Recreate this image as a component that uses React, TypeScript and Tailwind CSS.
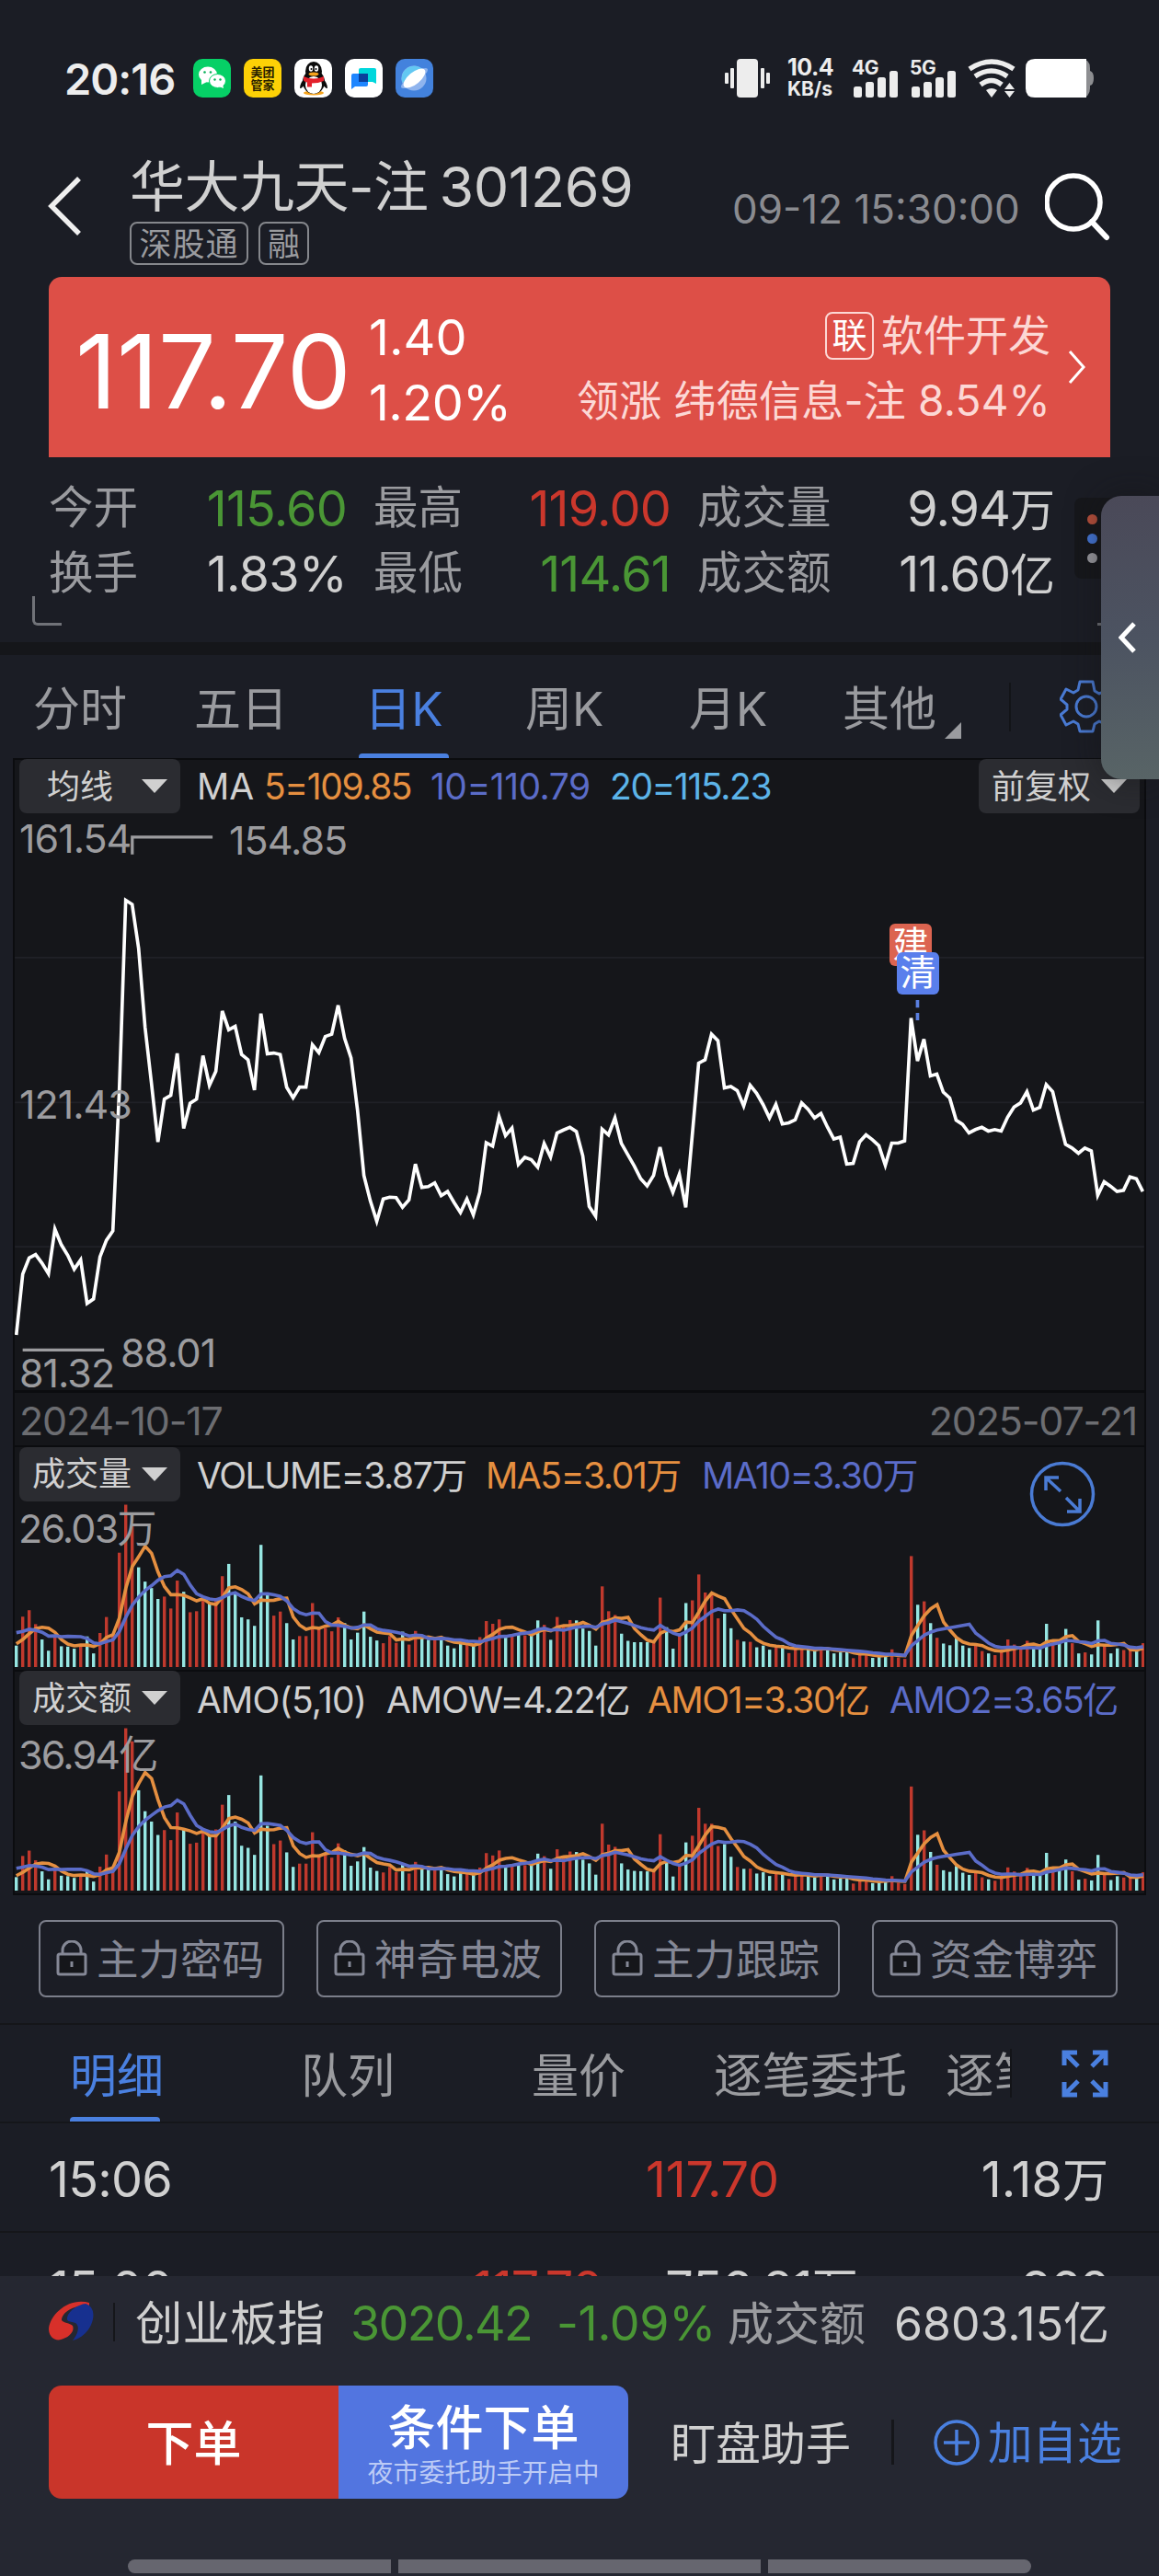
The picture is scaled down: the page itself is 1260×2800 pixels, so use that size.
const CLOSES = [
  1350, 1188, 1145, 1136, 1159, 1187, 1068, 1110, 1138, 1175, 1150, 1266, 1254, 1142, 1098, 1073, 700, 192, 203, 320,
  530, 680, 836, 722, 712, 600, 800, 733, 722, 606, 685, 648, 487, 537, 528, 603, 617, 698, 494, 601,
  599, 603, 690, 718, 690, 690, 577, 598, 555, 549, 472, 560, 612, 750, 925, 993, 1047, 988, 983, 984,
  1010, 990, 895, 957, 955, 945, 979, 968, 997, 1024, 988, 1030, 970, 838, 847, 768, 819, 799, 896, 877,
  883, 903, 840, 876, 812, 804, 797, 808, 873, 1008, 1034, 802, 817, 772, 840, 870, 900, 934, 953, 925,
  850, 925, 970, 922, 1010, 820, 626, 617, 549, 566, 692, 688, 699, 740, 685, 706, 736, 772, 736, 788,
  785, 777, 732, 749, 772, 760, 796, 828, 823, 895, 893, 836, 817, 830, 846, 898, 839, 839, 833, 506,
  620, 562, 660, 655, 703, 719, 778, 789, 812, 803, 797, 807, 803, 807, 770, 743, 732, 702, 751, 744,
  683, 702, 775, 842, 852, 866, 852, 860, 978, 942, 954, 968, 965, 929, 934, 968,
]

const VOLUMES = [
  63, 148, 167, 126, 81, 48, 88, 61, 60, 54, 60, 90, 40, 100, 147, 98, 336, 477, 418, 293,
  251, 232, 200, 207, 172, 254, 221, 161, 164, 203, 188, 203, 267, 303, 218, 146, 140, 121, 359, 211,
  151, 163, 129, 81, 91, 91, 188, 118, 115, 105, 146, 129, 81, 101, 163, 89, 78, 70, 91, 71,
  104, 66, 106, 86, 80, 80, 86, 63, 55, 71, 68, 63, 88, 135, 127, 140, 91, 93, 98, 93,
  98, 137, 124, 80, 147, 121, 138, 137, 113, 106, 63, 237, 164, 153, 98, 77, 73, 73, 73, 73,
  204, 117, 54, 98, 188, 196, 272, 219, 213, 143, 157, 114, 80, 75, 74, 58, 63, 51, 61, 65,
  41, 53, 57, 55, 46, 58, 53, 40, 43, 46, 26, 38, 40, 27, 31, 33, 52, 28, 24, 326,
  183, 193, 129, 86, 69, 64, 86, 63, 56, 63, 47, 40, 35, 48, 81, 66, 56, 77, 56, 53,
  127, 75, 78, 112, 70, 40, 43, 37, 137, 63, 40, 55, 50, 50, 53, 70,
]

// the nine sessions before the first visible one, needed by the averages
const LEAD_IN = [108, 107, 156, 141, 158, 83, 82, 51, 61]

// r = up day, c = down day
const DAYS = [
  'crrrccrccc', 'rccrrrrrrc', 'cccrrrcrrr', 'crrccccccc', 'rrccrrrrrr', 'rccccccrrr',
  'crrccrcccc', 'rcrrrrcrcr', 'ccrcrrrccc', 'crrrcccccr', 'rccrcrrrrr', 'ccrcrcccrc',
  'rrrccrcccc', 'rrrcccrrrr', 'crcrcccccr', 'rcrrrrrrcc', 'crccrcrccr', 'ccrrcr',
].join('')

const PITCH = 7

const AMOUNTS = VOLUMES.map((v, i) => {
  const price = 161.54 - ((CLOSES[i] + 40) / 1541) * 80.22
  return Math.min(477, (v * price) / 141.9)
})

function average(values: number[], lead: number[], n: number): number[] {
  const all = [...lead, ...values]
  return values.map((_, i) => {
    const end = i + lead.length + 1
    return all.slice(end - n, end).reduce((a, b) => a + b, 0) / n
  })
}

function toLine(values: number[]): string {
  return values.map((v, i) => `${1.8 + i * PITCH},${181 - v / 2.703}`).join(' ')
}

function Bars({ values, lead }: { values: number[]; lead: number[] }): JSX.Element {
  return (
    <svg className="block" width="1228" height="184" viewBox="0 0 1228 184">
      {values.map((v, i) => (
        <rect
          key={i}
          x={i * PITCH}
          y={181 - v / 2.703}
          width="3.4"
          height={v / 2.703}
          fill={DAYS[i] === 'c' ? '#96e6e2' : '#c0392d'}
        />
      ))}
      <polyline points={toLine(average(values, lead, 5))} fill="none" stroke="#e58f40" strokeWidth="3.6" />
      <polyline points={toLine(average(values, lead, 10))} fill="none" stroke="#5b6cc8" strokeWidth="3.6" />
    </svg>
  )
}

function Caret(): JSX.Element {
  return (
    <svg width="28" height="15" viewBox="0 0 28 15">
      <path d="M0 0h28L14 15z" fill="#d0d0d0" />
    </svg>
  )
}

function Picker({ label }: { label: string }): JSX.Element {
  return (
    <div className="flex h-[59px] w-[175px] shrink-0 items-center justify-between rounded-lg bg-[#2b2c31] pl-[14px] pr-[14px] text-[36px] tracking-normal text-[#d0d0d0]">
      <span className={label.length === 2 ? 'pl-[16px]' : ''}>{label}</span>
      <Caret />
    </div>
  )
}

function StatusBar(): JSX.Element {
  return (
    <div className="flex h-[150px] items-center pl-[70px] pt-[20px] text-[#ededed]">
      <span className="w-[140px] text-[47px] font-semibold tracking-[-1px]">20:16</span>
      <div className="flex w-[578px] gap-[14px]">
        <svg width="41" height="42" viewBox="0 0 41 42">
          <rect width="41" height="42" rx="10" fill="#06d066" />
          <ellipse cx="16" cy="17" rx="10" ry="8.500" fill="#fff" />
          <path d="M9 22l0 6 6-3z" fill="#fff" />
          <ellipse cx="26.500" cy="24" rx="9" ry="7.500" fill="#fff" stroke="#06d066" strokeWidth="1" />
          <path d="M28 30l5 2-1-5z" fill="#fff" />
          <circle cx="12.500" cy="14.500" r="1.300" fill="#06b058" />
          <circle cx="19" cy="14.500" r="1.300" fill="#06b058" />
          <circle cx="23.500" cy="22.500" r="1.200" fill="#06b058" />
          <circle cx="29.500" cy="22.500" r="1.200" fill="#06b058" />
        </svg>
        <div className="flex h-[42px] w-[41px] flex-col items-center justify-center rounded-[10px] bg-[#fdd106] text-[13px] font-bold leading-[14px] text-[#2a2200]">
          <span>美团</span>
          <span>管家</span>
        </div>
        <svg width="41" height="42" viewBox="0 0 41 42">
          <rect width="41" height="42" rx="10" fill="#fff" />
          <ellipse cx="21" cy="37" rx="11" ry="2.500" fill="#f5a31c" />
          <path d="M12 20q-6 6-6 12 3 0 6-6zM30 20q6 6 6 12-3 0-6-6z" fill="#0b0b0b" />
          <ellipse cx="21" cy="25" rx="12" ry="13" fill="#0b0b0b" />
          <ellipse cx="21" cy="13.500" rx="9" ry="10.500" fill="#0b0b0b" />
          <ellipse cx="21" cy="28.500" rx="9" ry="9.500" fill="#fff" />
          <path d="M10 19q11 5 22 0v5q-6 2.500-13 2.500v4h-5v-5q-3-.7-4-2z" fill="#e3202b" />
          <ellipse cx="18" cy="10.500" rx="2.200" ry="3.200" fill="#fff" />
          <ellipse cx="24" cy="10.500" rx="2.200" ry="3.200" fill="#fff" />
          <circle cx="18.500" cy="11" r="1" />
          <circle cx="23.500" cy="11" r="1" />
          <ellipse cx="21" cy="16.500" rx="5.500" ry="2" fill="#f5a31c" />
        </svg>
        <svg width="41" height="42" viewBox="0 0 41 42">
          <rect width="41" height="42" rx="10" fill="#fff" />
          <path d="M17 10h15q2 0 2 2v15l-4-2H15V12q0-2 2-2z" fill="#00d7dc" />
          <path d="M9 16h16v12q0 2-2 2H11l-4 3V18q0-2 2-2z" fill="#1e86ff" />
          <path d="M15 16h10v9H15z" fill="#0a3f9c" />
        </svg>
        <svg width="41" height="42" viewBox="0 0 41 42">
          <rect width="41" height="42" rx="10" fill="#4382dd" />
          <ellipse cx="20.500" cy="21" rx="17.500" ry="5" fill="#8fb4ee" transform="rotate(-36 20.500 21)" />
          <circle cx="20" cy="21" r="13.500" fill="#8fb4ee" />
          <path d="M7.500 26A13.500 13.500 0 0 1 30 12z" fill="#63c8f2" />
          <ellipse cx="20.500" cy="21" rx="14.500" ry="6.500" fill="#fff" transform="rotate(-40 20.500 21)" />
        </svg>
      </div>
      <svg width="50" height="42" viewBox="0 0 50 42" fill="#ededed">
        <rect x="0" y="15" width="4" height="12" rx="1" />
        <rect x="6" y="10" width="4" height="22" rx="1" />
        <rect x="13" y="0" width="23" height="42" rx="4" />
        <rect x="39" y="10" width="4" height="22" rx="1" />
        <rect x="45" y="15" width="4" height="12" rx="1" />
      </svg>
      <div className="ml-[18px] flex w-[70px] flex-col text-[25px] font-bold leading-[24px]">
        <span className="tracking-[-0.5px]">10.4</span>
        <span className="text-[21px]">KB/s</span>
      </div>
      <Signal label="4G" />
      <Signal label="5G" />
      <svg width="52" height="42" viewBox="0 0 52 42" fill="none" stroke="#ededed" strokeWidth="5.500">
        <path d="M2 11Q26-5 50 11" />
        <path d="M8 19Q26 7 43 19" />
        <path d="M14 28Q26 19 37 28" />
        <path d="M20 34Q26 30 32 34L26 42z" fill="#ededed" stroke="none" />
        <path d="M40 33l5.500-7 5.500 7zM40 35l5.500 7 5.500-7z" fill="#ededed" stroke="none" />
      </svg>
      <svg className="ml-[11px]" width="75" height="42" viewBox="0 0 75 42">
        <path d="M55 0h5q10 0 10 10v3q4 1 4 8t-4 8v3q0 10-10 10h-5z" fill="#8d8e91" />
        <path d="M10 0h56v42H10Q0 42 0 32V10Q0 0 10 0z" fill="#fff" />
      </svg>
    </div>
  )
}

function Signal({ label }: { label: string }): JSX.Element {
  return (
    <div className="relative w-[63px]">
      <span className="absolute left-0 top-[-2px] text-[21px] font-bold leading-[23px] tracking-[-0.5px]">{label}</span>
      <svg width="52" height="42" viewBox="0 0 52 42" fill="#ededed">
        <rect x="2" y="30" width="9" height="12" rx="2.500" />
        <rect x="15" y="25" width="9" height="17" rx="2.500" />
        <rect x="28" y="20" width="9" height="22" rx="2.500" />
        <rect x="41" y="13" width="9" height="29" rx="2.500" />
      </svg>
    </div>
  )
}

function Header(): JSX.Element {
  return (
    <div className="flex h-[151px] pl-[52px]">
      <svg className="mt-[42px] w-[89px]" width="89" height="64" viewBox="0 0 89 64" fill="none">
        <path d="M34 2L4 32l30 30" stroke="#efefef" strokeWidth="5.500" />
      </svg>
      <div className="w-[655px] pt-[17px]">
        <div className="flex h-[72px] items-center text-[60px] tracking-[-0.5px] text-[#d0d0d0]">
          <span>华大九天-注</span>
          <span className="ml-[12px] text-[61px] tracking-[-0.5px]">301269</span>
        </div>
        <div className="mt-[2px] flex gap-[11px] text-[35px] text-[#9a9b9f]">
          <span className="flex h-[47px] w-[129px] items-center justify-center rounded-lg border-2 border-[#85878c] pt-[2px] tracking-[1px]">深股通</span>
          <span className="flex h-[47px] w-[55px] items-center justify-center rounded-lg border-2 border-[#85878c] pt-[2px]">融</span>
        </div>
      </div>
      <span className="mt-[55px] w-[340px] text-[44px] text-[#8a8b90]">09-12 15:30:00</span>
      <svg className="mt-[38px]" width="72" height="74" viewBox="0 0 72 74" fill="none" stroke="#fff" strokeWidth="5.500">
        <circle cx="31" cy="32" r="29" />
        <path d="M51 53l16 17" strokeWidth="6" strokeLinecap="round" />
      </svg>
    </div>
  )
}

function PriceCard(): JSX.Element {
  return (
    <div className="mx-[53px] flex h-[196px] items-center rounded-t-[14px] bg-[#dd4f47] pl-[29px] text-white">
      <span className="w-[319px] pt-[8px] text-[111px] tracking-[-0.2px]">117.70</span>
      <div className="flex flex-1 flex-col pt-[6px] text-[54px] leading-[71px]">
        <span>1.40</span>
        <span className="tracking-[-0.6px]">1.20%</span>
      </div>
      <div className="flex flex-col items-end pt-[2px] text-[46px] leading-[71px] text-[#fcd8d5]">
        <div className="flex items-center gap-[8px]">
          <span className="flex h-[52px] w-[53px] items-center justify-center rounded-lg border-2 border-[#fcd8d5] text-[38px] text-white">联</span>
          <span>软件开发</span>
        </div>
        <span className="tracking-[0.2px]">领涨 纬德信息-注 8.54%</span>
      </div>
      <svg className="ml-[19px] mr-[26px]" width="20" height="38" viewBox="0 0 20 38" fill="none">
        <path d="M2 2l15 17L2 36" stroke="#fff" strokeWidth="3" />
      </svg>
    </div>
  )
}

const STATS = [
  ['今开', '115.60', 'text-[#4a9635]', '最高', '119.00', 'text-[#cb372c]', '成交量', '9.94', '万'],
  ['换手', '1.83%', 'text-[#d0d0d0]', '最低', '114.61', 'text-[#4a9635]', '成交额', '11.60', '亿'],
]

function Stats(): JSX.Element {
  return (
    <div className="relative h-[201px] pt-[20px]">
      {STATS.map((s) => (
        <div key={s[0]} className="grid h-[71px] grid-cols-[100px_224px_29px_100px_223px_29px_150px_239px] items-center pl-[53px] text-[48.5px] text-[#9a9b9f]">
          <span>{s[0]}</span>
          <span className={`text-right text-[54px] tracking-[-0.8px] ${s[2]}`}>{s[1]}</span>
          <span />
          <span>{s[3]}</span>
          <span className={`text-right text-[54px] tracking-[-0.8px] ${s[5]}`}>{s[4]}</span>
          <span />
          <span>{s[6]}</span>
          <span className="text-right text-[54px] text-[#d0d0d0]">
            <span className="tracking-[-1px]">{s[7]}</span>
            <span className="text-[49px]">{s[8]}</span>
          </span>
        </div>
      ))}
      <div className="absolute left-[35px] top-[151px] h-[32px] w-[32px] rounded-bl-md border-b-[3px] border-l-[3px] border-[#707278]" />
      <div className="absolute left-[1168px] top-[44px] flex h-[88px] w-[60px] flex-col gap-[10px] rounded-lg bg-[#16171b] pl-[14px] pt-[18px]">
        <span className="h-[11px] w-[11px] rounded-full bg-[#b8503c]" />
        <span className="h-[11px] w-[11px] rounded-full bg-[#4577d8]" />
        <span className="h-[11px] w-[11px] rounded-full bg-[#9a9aa0]" />
      </div>
      <div className="absolute left-[1193px] top-[180px] h-[3px] w-[6px] bg-[#707278]" />
      {/* pull-out handle */}
      <div className="absolute left-[1197px] top-[42px] z-10 flex h-[308px] w-[63px] items-center rounded-l-[22px] bg-gradient-to-b from-[#4a4958] via-[#4c5361] to-[#586466] pl-[19px] shadow-[0_0_36px_rgba(20,20,22,0.55)]">
        <svg width="20" height="34" viewBox="0 0 20 34" fill="none">
          <path d="M17 2L3 17l14 15" stroke="#fff" strokeWidth="5" />
        </svg>
      </div>
    </div>
  )
}

function Gear(): JSX.Element {
  return (
    <svg width="58" height="58" viewBox="0 0 58 58" fill="none" stroke="#4a7bd4" strokeWidth="3">
      <path d="M22 2h14l2 10 5 3 8-4 6 10-8 6v5l8 6-6 11-8-4-5 3-2 8H22l-2-8-5-3-8 4-6-11 7-6v-5l-7-6 6-11 8 4 5-3z" strokeLinejoin="round" />
      <circle cx="29" cy="29" r="11" />
    </svg>
  )
}

function PeriodTabs(): JSX.Element {
  return (
    <div className="box-content flex h-[112px] items-center border-t-[14px] border-[#15161a] pl-[36px] text-[51px] text-[#9a9b9f]">
      <span className="w-[175px] pt-[4px]">分时</span>
      <span className="w-[179px] pt-[4px]">五日</span>
      <div className="flex h-[112px] w-[98px] flex-col items-center justify-between text-[#4a80e0]">
        <span className="pt-[33px]">日K</span>
        <span className="h-[5px] w-[98px] rounded-t bg-[#4a80e0]" />
      </div>
      <span className="w-[178px] pl-[83px] pt-[4px]">周K</span>
      <span className="ml-[83px] w-[167px] pt-[4px]">月K</span>
      <span className="w-[111px] pt-[4px]">其他</span>
      <svg className="mt-[52px]" width="18" height="18" viewBox="0 0 18 18">
        <path d="M18 0v18H0z" fill="#9a9b9f" />
      </svg>
      <span className="ml-[52px] mr-[53px] h-[53px] w-[2px] shrink-0 bg-[#131418]" />
      <Gear />
    </div>
  )
}

function PriceChart(): JSX.Element {
  const points = CLOSES.map((y, i) => `${43 + i * 17.15},${y}`).join(' ')
  return (
    <div className="relative h-[631px] border-b-[3px] border-[#0b0c0f] text-[43px] leading-[44px] tracking-[-1px] text-[#9c9c9f]">
      <svg className="block" width="1228" height="628" viewBox="39 -42 3009 1539">
        <path d="M39 345H3048M39 731H3048M39 1115H3048" stroke="#202127" strokeWidth="4" />
        <polyline points={points} fill="none" stroke="#fff" strokeWidth="9" />
        <path d="M352 70V24H566M60 1390H277" fill="none" stroke="#9c9c9f" strokeWidth="8" />
        <path d="M2444 458v20m0 14v20" stroke="#5a7fe0" strokeWidth="9" />
      </svg>
      <span className="absolute left-[5px] top-[6px]">161.54</span>
      <span className="absolute left-[233px] top-[8px]">154.85</span>
      <span className="absolute left-[5px] top-[295px]">121.43</span>
      <span className="absolute left-[115px] top-[565px]">88.01</span>
      <span className="absolute left-[5px] top-[587px]">81.32</span>
      <span className="absolute left-[951px] top-[121px] h-[46px] w-[46px] rounded-md bg-[#dc6450] text-center text-[39px] leading-[44px] tracking-normal text-white">建</span>
      <span className="absolute left-[959px] top-[152px] h-[46px] w-[46px] rounded-md bg-[#5a7fec] text-center text-[39px] leading-[44px] tracking-normal text-white">清</span>
    </div>
  )
}

function Charts(): JSX.Element {
  return (
    <div className="mx-[14px] border-x-2 border-t-2 border-[#0b0c0f] bg-[#15161a] text-[39px] tracking-[-1.4px] text-[#d0d0d0]">
      <div className="flex h-[57px] items-center pl-[5px] pr-[5px]">
        <Picker label="均线" />
        <span className="ml-[18px] w-[73px] tracking-normal">MA</span>
        <span className="w-[181px] text-[#e58f40]">5=109.85</span>
        <span className="w-[195px] tracking-[-0.5px] text-[#5b6cc8]">10=110.79</span>
        <span className="flex-1 text-[#5cb3e8]">20=115.23</span>
        <Picker label="前复权" />
      </div>
      <PriceChart />
      <div className="flex h-[59px] items-center justify-between border-b-2 border-[#0b0c0f] pl-[5px] pr-[8px] pt-[4px] text-[43px] tracking-[-1.2px] text-[#6c6d71]">
        <span>2024-10-17</span>
        <span>2025-07-21</span>
      </div>
      <div className="relative">
        <div className="flex h-[58px] items-center pl-[5px]">
          <Picker label="成交量" />
          <span className="ml-[18px] w-[314px] pt-[2px]">VOLUME=3.87万</span>
          <span className="w-[235px] pt-[2px] text-[#e58f40]">MA5=3.01万</span>
          <span className="pt-[2px] text-[#5b6cc8]">MA10=3.30万</span>
        </div>
        <Bars values={VOLUMES} lead={LEAD_IN} />
        <span className="absolute left-[4px] top-[62px] text-[43px] leading-[52px] tracking-[-1.8px] text-[#9c9c9f]">26.03万</span>
        <svg className="absolute left-[1103px] top-[15px]" width="72" height="72" viewBox="0 0 72 72" fill="none" stroke="#4a7bd4" strokeWidth="3.500">
          <circle cx="36" cy="36" r="33.500" />
          <path d="M18 32V18h14M19 19l15 14M40 40l15 15M55 41v14H41" />
        </svg>
      </div>
      <div className="relative border-y-2 border-[#0b0c0f]">
        <div className="flex h-[57px] items-center pl-[5px]">
          <Picker label="成交额" />
          <span className="ml-[18px] w-[206px] pt-[3px] tracking-[-0.8px]">AMO(5,10)</span>
          <span className="w-[284px] pt-[3px] tracking-[-1.1px]">AMOW=4.22亿</span>
          <span className="w-[263px] pt-[3px] text-[#e58f40]">AMO1=3.30亿</span>
          <span className="pt-[3px] text-[#5b6cc8]">AMO2=3.65亿</span>
        </div>
        <Bars values={AMOUNTS} lead={LEAD_IN.map((v) => v * 0.65)} />
        <span className="absolute left-[4px] top-[64px] text-[43px] leading-[52px] tracking-[-1.8px] text-[#9c9c9f]">36.94亿</span>
      </div>
    </div>
  )
}

function Locked(): JSX.Element {
  return (
    <div className="flex h-[139px] gap-[35px] pl-[42px] pt-[27px]">
      {['主力密码', '神奇电波', '主力跟踪', '资金博弈'].map((name) => (
        <div key={name} className="flex h-[84px] w-[267px] items-center gap-[10px] rounded-lg border-2 border-[#7b7e8a] pl-[17px] text-[45.5px] text-[#858896]">
          <svg width="34" height="40" viewBox="0 0 34 40" fill="none" stroke="#858896" strokeWidth="3">
            <path d="M7 15V11a10 10 0 0 1 20 0v4" />
            <rect x="2" y="15" width="30" height="22" rx="2" fill="#15161a" />
            <path d="M17 23v6" />
          </svg>
          <span className="pt-[4px]">{name}</span>
        </div>
      ))}
    </div>
  )
}

function DetailTabs(): JSX.Element {
  return (
    <div className="flex h-[109px] items-center border-y-2 border-[#15161a] pl-[76px] text-[51px] text-[#9a9b9f]">
      <div className="flex h-full w-[251px] flex-col justify-between text-[#4a80e0]">
        <span className="pt-[30px]">明细</span>
        <span className="h-[5px] w-[98px] rounded-t bg-[#4a80e0]" />
      </div>
      <span className="w-[251px] pt-[6px]">队列</span>
      <span className="w-[198px] pt-[6px]">量价</span>
      <span className="w-[252px] pt-[6px] text-[52.5px]">逐笔委托</span>
      <span className="w-[70px] overflow-hidden pt-[6px] text-[52.5px]">逐笔成交</span>
      <span className="mr-[54px] h-[53px] w-[2px] bg-[#131418]" />
      <svg width="51" height="52" viewBox="0 0 51 52" fill="none" stroke="#4a80e0" strokeWidth="5">
        <path d="M3 17V3h14M4 4l14 14M34 3h14v14M47 4L33 18M3 35v14h14M4 48l14-14M34 49h14V35M47 48L33 34" />
      </svg>
    </div>
  )
}

function Trades(): JSX.Element {
  return (
    <div className="h-[166px] overflow-hidden text-[54px] tracking-[-0.8px] text-[#d0d0d0]">
      <div className="grid h-[119px] grid-cols-[500px_294px_358px] items-center border-b-2 border-[#15161a] pl-[53px] pt-[4px]">
        <span>15:06</span>
        <span className="text-right tracking-[-0.2px] text-[#cb372c]">117.70</span>
        <span className="text-right tracking-normal">
          <span>1.18</span>
          <span className="text-[50px]">万</span>
        </span>
      </div>
      <div className="grid h-[119px] grid-cols-[400px_202px_277px_273px] items-center pl-[53px] pt-[2px]">
        <span>15:00</span>
        <span className="text-right text-[#cb372c]">117.70</span>
        <span className="text-right">
          <span>756.81</span>
          <span className="text-[50px]">万</span>
        </span>
        <span className="text-right tracking-[-2px]">960</span>
      </div>
    </div>
  )
}

function BottomBar(): JSX.Element {
  return (
    <div className="h-[326px] bg-[#252731] text-[#d0d0d0]">
      <div className="flex h-[100px] items-center pl-[53px] text-[50px]">
        <svg width="50" height="46" viewBox="0 0 50 46">
          <path d="M44 2C22-4 2 14 0 30c0 10 8 15 16 11 8-3 12-9 10-14-3-3-10-3-12-6C14 12 28 4 44 5z" fill="#d8302a" />
          <path d="M40 3c8 2 11 12 6 23-4 9-12 15-20 17 6-7 8-16 3-19-5-2-10-1-9-6 2-8 12-14 20-15z" fill="#17308f" />
        </svg>
        <span className="ml-[20px] mr-[22px] h-[42px] w-[2px] bg-[#15161a]" />
        <span className="w-[234px] pt-[3px] text-[51.5px]">创业板指</span>
        <span className="w-[224px] pt-[3px] text-[52px] tracking-[-1.6px] text-[#4a9635]">3020.42</span>
        <span className="w-[186px] pt-[3px] text-[52px] tracking-[-0.3px] text-[#4a9635]">-1.09%</span>
        <span className="w-[181px] pt-[3px] text-[#9a9b9f]">成交额</span>
        <span className="pt-[3px]">6803.15亿</span>
      </div>
      <div className="flex items-center pl-[53px] pt-[19px] text-[49px]">
        <div className="flex h-[123px] w-[630px] overflow-hidden rounded-[14px] text-[52px] font-medium text-white">
          <div className="flex w-1/2 items-center justify-center bg-[#c9352a] pt-[5px]">下单</div>
          <div className="flex w-1/2 flex-col items-center justify-center bg-[#5275e0] pt-[8px]">
            <span className="leading-[58px]">条件下单</span>
            <span className="text-[28px] font-normal leading-[38px] text-[#bccbf6]">夜市委托助手开启中</span>
          </div>
        </div>
        <span className="ml-[46px] w-[240px] pt-[4px]">盯盘助手</span>
        <span className="h-[49px] w-[3px] bg-[#15161a]" />
        <svg className="ml-[43px] mr-[9px]" width="50" height="50" viewBox="0 0 50 50" fill="none" stroke="#4a80e0" strokeWidth="3.500">
          <circle cx="25" cy="25" r="23" />
          <path d="M25 11v28M11 25h28" />
        </svg>
        <span className="pt-[4px] text-[48.5px] text-[#4a80e0]">加自选</span>
      </div>
      <div className="mt-[66px] flex gap-[8px] pl-[139px]">
        <span className="h-[15px] w-[286px] rounded-l-full bg-[#66666f]" />
        <span className="h-[15px] w-[394px] bg-[#66666f]" />
        <span className="h-[15px] w-[286px] rounded-r-full bg-[#66666f]" />
      </div>
    </div>
  )
}

function App(): JSX.Element {
  return (
    <div className="h-[2800px] w-[1260px] overflow-hidden whitespace-nowrap bg-[#1b1d25] font-['Inter','Noto_Sans_CJK_SC',sans-serif] leading-none">
      <StatusBar />
      <Header />
      <PriceCard />
      <Stats />
      <PeriodTabs />
      <Charts />
      <Locked />
      <DetailTabs />
      <Trades />
      <BottomBar />
    </div>
  )
}

export default App
